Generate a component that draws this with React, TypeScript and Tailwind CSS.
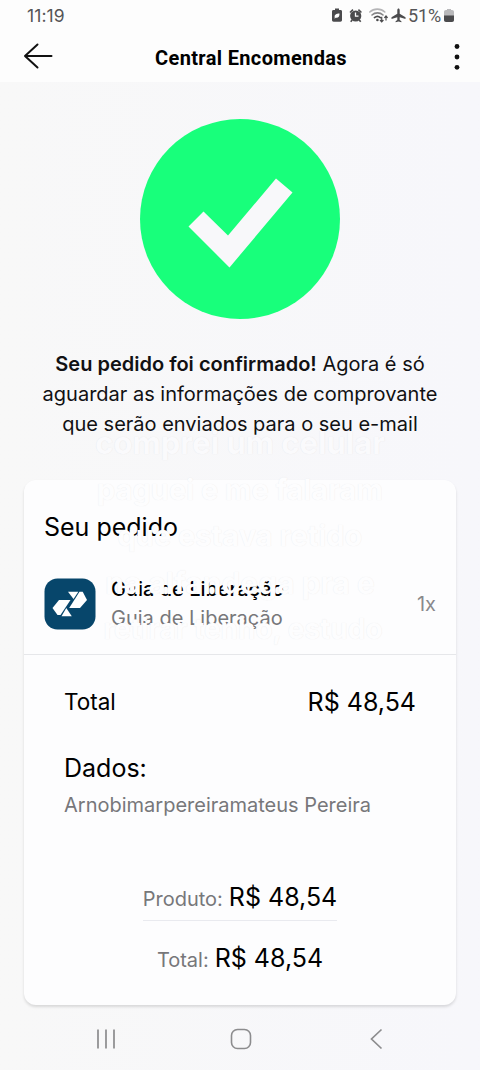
import React from "react";

function StatusIcons() {
  return (
    <svg width="78" height="18" viewBox="0 0 78 18" fill="#4b4b4d">
      <path d="M3.500 3H5V1.500h4V3h1.500c1 0 1.500.6 1.500 1.500V13c0 1.100-.6 1.700-1.700 1.700H3.700C2.600 14.700 2 14.100 2 13V4.500C2 3.600 2.500 3 3.500 3z" />
      <path d="M4.700 10.500c-.5-3 1.600-4 4.800-4 .2 3.200-1.500 4.800-3.900 4.200l-1 1z" fill="#fff" />
      <circle cx="25.700" cy="9" r="5.600" />
      <path d="M20 5.500l3-2.900M31.400 5.500l-3-2.900M22.200 13l-1.500 1.700M29.200 13l1.500 1.700" stroke="#4b4b4d" strokeWidth="1.700" />
      <path d="M25.500 5.500V9.200h3" stroke="#fff" strokeWidth="1.300" fill="none" />
      <g fill="none" strokeLinecap="round">
        <path d="M39.800 5c4-3.800 11-3.800 15 0" stroke="#b5b5b7" strokeWidth="1.600" />
        <path d="M42 8c3-2.800 8-2.800 11 0" stroke="#858587" strokeWidth="1.600" />
        <path d="M44.400 10.600c1.800-1.500 4.300-1.500 6 0" stroke="#4b4b4d" strokeWidth="1.600" />
      </g>
      <circle cx="47.400" cy="13" r="1.300" />
      <path d="M51.700 9.800v5M50 13l1.700 1.800 1.700-1.800M56 13.500V9M54.400 10.800L56 9l1.600 1.800" stroke="#4b4b4d" strokeWidth="1.200" fill="none" />
      <path d="M67.300 3.300c0-2.400 2.400-2.400 2.400 0v3.400l5.800 3.500v1.700l-5.800-1.700v2.700l1.700 1.300v1.100l-2.900-.8-2.900.8v-1.100l1.700-1.300v-2.700l-5.800 1.700v-1.700l5.800-3.500z" />
    </svg>
  );
}

function BatteryIcon() {
  return (
    <svg width="10" height="14" viewBox="0 0 10 14">
      <path d="M3 0h4v1h1c1.300 0 2 .8 2 2v4H0V3c0-1.200.7-2 2-2h1z" fill="#b9b9bb" />
      <path d="M0 6.500h10V11c0 1.300-.7 2-2 2H2c-1.300 0-2-.7-2-2z" fill="#4b4b4d" />
    </svg>
  );
}

function Caption() {
  return (
    <div
      aria-hidden="true"
      className="pointer-events-none absolute inset-x-0 top-[420px] text-center text-[31px] leading-[46.5px] font-bold whitespace-nowrap text-[#fdfdfe] [text-shadow:0_0_1px_rgba(110,110,120,0.14)]"
    >
      <div className="text-[#fafafc]">comprei um celular</div>
      <div className="text-[29px]">paguei e me falaram</div>
      <div className="text-[29px]">que estava retido</div>
      <div className="text-[30px]">na alfandega pra e</div>
      <div className="ml-[6px] text-[28px]">retirar tenho, estudo</div>
    </div>
  );
}

export default function App() {
  return (
    <div className="relative flex h-[1070px] w-[480px] flex-col overflow-hidden bg-linear-to-r from-[#f8f8f8] to-[#f7f7fb] font-['Inter',sans-serif] text-[#111113]">
      <header className="h-[82px] shrink-0 bg-[#fdfdfd]">
        <div className="flex h-8 items-center justify-between pr-[26px] pl-[27px] text-[#555557]">
          <span className="text-[17.500px] tracking-[0.1px]">11:19</span>
          <div className="flex items-center">
            <StatusIcons />
            <span className="-mt-[1px] font-['Roboto',sans-serif] text-[18px] tracking-[-0.1px]">51%</span>
            <span className="ml-[3px]"><BatteryIcon /></span>
          </div>
        </div>
        <div className="flex h-[50px] items-start justify-between pr-[19px] pl-[23px]">
          <svg className="mt-[10px]" width="30" height="28" viewBox="0 0 30 28" fill="none" stroke="#111" strokeWidth="2" strokeLinecap="round" strokeLinejoin="round">
            <path d="M28.500 14H2M14.500 2.500L2 14l12.500 11.500" />
          </svg>
          <h1 className="mt-[12px] -ml-[4px] font-['Roboto',sans-serif] text-[20px] leading-7 font-bold tracking-[0.35px] text-black">Central Encomendas</h1>
          <svg className="mt-[11px]" width="8" height="28" viewBox="0 0 8 28" fill="#111">
            <circle cx="4" cy="3.500" r="2.400" />
            <circle cx="4" cy="14" r="2.400" />
            <circle cx="4" cy="24.300" r="2.400" />
          </svg>
        </div>
      </header>

      <main className="flex flex-col items-center">
        <svg className="mt-[36px] shrink-0" width="202" height="202" viewBox="0 0 202 202">
          <circle cx="101" cy="101" r="100" fill="#18ff7b" />
          <path d="M49.500 108.500L64.500 93.500L89 117.500L137 60.500L153.500 74.500L90.500 149.500Z" fill="#f8f8fa" />
        </svg>

        <p className="mt-[29px] text-center text-[20px] leading-[30px] whitespace-nowrap">
          <b className="font-semibold">Seu pedido foi confirmado!</b> Agora é só<br />
          aguardar as informações de comprovante<br />
          que serão enviados para o seu e-mail
        </p>

        <section className="mt-[41px] h-[525px] w-[432px] rounded-xl bg-[#fdfdfe] text-black shadow-[0_2px_3px_rgba(0,0,0,0.13)]">
          <div className="h-[175px] border-b border-[#e6e7ea] px-5 pt-8">
            <h2 className="text-[25px] leading-[30px]">Seu pedido</h2>
            <div className="mt-[33px] flex items-center">
              <svg width="52" height="52" viewBox="0 0 52 52">
                <rect x=".5" y=".5" width="51" height="51" rx="13" fill="#07466b" />
                <g fill="#fff">
                  <path d="M8.500 30L15 22H26.500L16.500 37H13.500Z" />
                  <path d="M22.300 30L27.800 38.300H17.500Z" />
                  <path d="M24 13.700H34.300L29.500 21Z" />
                  <path d="M35.500 13.700H38.700L43 22L36 30H25.200Z" />
                </g>
              </svg>
              <div className="ml-[15px] text-[20px] leading-[29px]">
                <div className="font-medium">Guia de Liberação</div>
                <div className="text-[#77777a]">Guia de Liberação</div>
              </div>
              <span className="ml-auto text-[20px] text-[#89898c]">1x</span>
            </div>
          </div>
          <div className="px-10 pt-[31px]">
            <div className="flex h-[34px] items-center justify-between">
              <span className="pb-[2px] text-[22.500px]">Total</span>
              <span className="text-[25px]">R$ 48,54</span>
            </div>
            <h2 className="mt-[30px] text-[25px] leading-[36px]">Dados:</h2>
            <p className="mt-[4px] text-[20px] leading-[30px] text-[#77777a]">Arnobimarpereiramateus Pereira</p>
          </div>
          <div className="mt-[58px] flex flex-col items-center text-[20px] text-[#77777a]">
            <div className="flex h-[43px] items-start border-b border-[#e9eaef] leading-[38px]">
              <span className="pt-[2px]">Produto:</span>
              <span className="ml-[6px] text-[25px] text-black">R$ 48,54</span>
            </div>
            <div className="mt-[18px] flex leading-[38px]">
              <span className="pt-[2px]">Total:</span>
              <span className="ml-[6px] text-[25px] text-black">R$ 48,54</span>
            </div>
          </div>
        </section>
      </main>

      <nav className="flex h-[65px] shrink-0 items-center justify-between pt-[3px] pr-[97px] pl-[95px]">
        <svg width="22" height="22" viewBox="0 0 22 22" stroke="#8c8c8e" strokeWidth="1.700"><path d="M3 1.500v19M11 1.500v19M19 1.500v19" /></svg>
        <svg className="-ml-[5px]" width="22" height="22" viewBox="0 0 22 22" fill="none" stroke="#8c8c8e" strokeWidth="1.600"><rect x="1.500" y="1.500" width="19" height="19" rx="6" /></svg>
        <svg width="14" height="22" viewBox="0 0 14 22" fill="none" stroke="#8c8c8e" strokeWidth="1.700"><path d="M12.500 1.500L2.500 11l10 9.500" /></svg>
      </nav>
      <Caption />
    </div>
  );
}
